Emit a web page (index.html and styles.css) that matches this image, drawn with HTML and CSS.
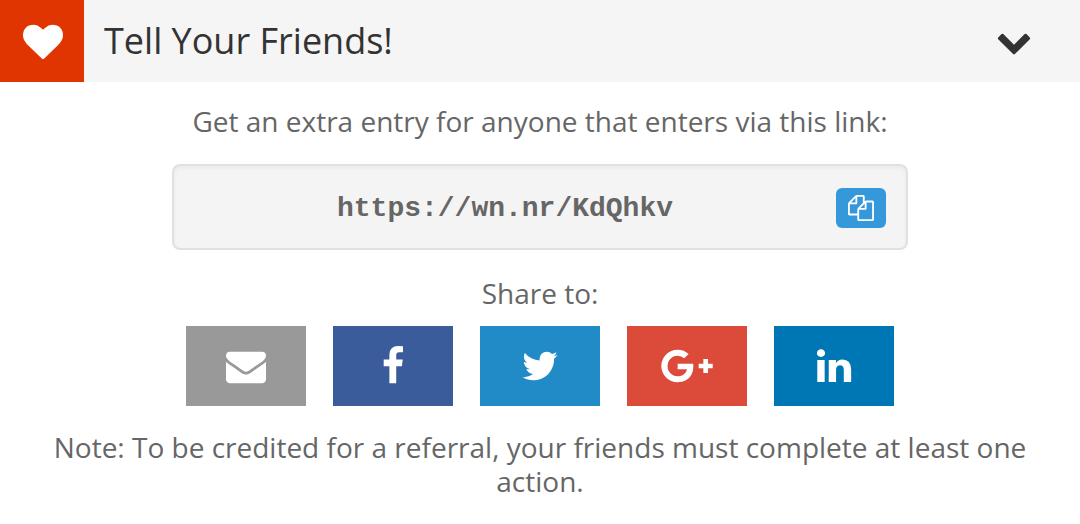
FILE: index.html
```html
<!DOCTYPE html>
<html lang="en">
<head>
<meta charset="utf-8">
<title>Tell Your Friends!</title>
<link rel="stylesheet" href="styles.css">
</head>
<body>
<section class="entry">
  <header class="entry-header">
    <span class="entry-badge">
      <svg class="icon-heart" viewBox="0 0 1792 1792" aria-hidden="true"><path d="M896 1664q-26 0-44-18l-624-602q-10-8-27.5-26t-55.5-65.5-68-97.5-53.5-121-23.5-138q0-220 127-344t351-124q62 0 126.5 21.5t120 58 95.5 68.5 76 68q36-36 76-68t95.5-68.5 120-58 126.5-21.5q224 0 351 124t127 344q0 221-229 450l-623 600q-18 18-44 18z"/></svg>
    </span>
    <h1 class="entry-title">Tell Your Friends!</h1>
    <button class="entry-toggle" type="button" aria-label="Collapse">
      <svg class="icon-chevron" viewBox="0 0 1792 1792" aria-hidden="true"><path d="M1683 808l-742 741q-19 19-45 19t-45-19l-742-741q-19-19-19-45.5t19-45.5l166-165q19-19 45-19t45 19l531 531 531-531q19-19 45-19t45 19l166 165q19 19 19 45.5t-19 45.5z"/></svg>
    </button>
  </header>
  <div class="entry-body">
    <p class="text">Get an extra entry for anyone that enters via this link:</p>
    <div class="link-box">
      <a class="link-url" href="https://wn.nr/KdQhkv">https://wn.nr/KdQhkv</a>
      <button class="copy" type="button" aria-label="Copy link">
        <svg class="icon-copy" viewBox="0 0 1792 1792" aria-hidden="true"><path d="M1696 384q40 0 68 28t28 68v1216q0 40-28 68t-68 28h-960q-40 0-68-28t-28-68v-288h-544q-40 0-68-28t-28-68v-672q0-40 20-88t48-76l408-408q28-28 76-48t88-20h416q40 0 68 28t28 68v328q68-40 128-40h416zm-544 213l-299 299h299v-299zm-640-384l-299 299h299v-299zm196 647l316-316v-416h-384v416q0 40-28 68t-68 28h-416v640h512v-256q0-40 20-88t48-76zm956 804v-1152h-384v416q0 40-28 68t-68 28h-416v640h896z"/></svg>
      </button>
    </div>
    <p class="text">Share to:</p>
    <div class="share">
      <button class="share-button email" type="button" aria-label="Email">
        <svg class="icon-share" viewBox="0 0 1792 1792" aria-hidden="true"><path d="M1792 710v794q0 66-47 113t-113 47h-1472q-66 0-113-47t-47-113v-794q44 49 101 87 362 246 497 345 57 42 92.5 65.5t94.5 48 110 24.5h2q51 0 110-24.5t94.5-48 92.5-65.5q170-123 498-345 57-39 100-87zm0-294q0 79-49 151t-122 123q-376 261-468 325-10 7-42.5 31t-54 38.5-52 32.5-57.5 27-50 9h-2q-23 0-50-9t-57.5-27-52-32.5-54-38.5-42.5-31q-91-64-262-182.5t-205-142.5q-62-42-117-115.5t-55-136.5q0-78 41.5-130t118.5-52h1472q65 0 112.5 47t47.5 113z"/></svg>
      </button>
      <button class="share-button facebook" type="button" aria-label="Facebook">
        <svg class="icon-share" viewBox="0 0 1792 1792" aria-hidden="true"><path d="M1343 12v264h-157q-86 0-116 36t-30 108v189h293l-39 296h-254v759h-306v-759h-255v-296h255v-218q0-186 104-288.5t277-102.5q147 0 228 12z"/></svg>
      </button>
      <button class="share-button twitter" type="button" aria-label="Twitter">
        <svg class="icon-share" viewBox="0 0 1792 1792" aria-hidden="true"><path d="M1684 408q-67 98-162 167 1 14 1 42 0 130-38 259.5t-115.5 248.5-184.5 210.5-258 146-323 54.5q-271 0-496-145 35 4 78 4 225 0 401-138-105-2-188-64.5t-114-159.5q33 5 61 5 43 0 85-11-112-23-185.5-111.5t-73.5-205.5v-4q68 38 146 41-66-44-105-115t-39-154q0-88 44-163 121 149 294.5 238.5t371.5 99.5q-8-38-8-74 0-134 94.5-228.5t228.5-94.5q140 0 236 102 109-21 205-78-37 115-142 178 93-10 186-50z"/></svg>
      </button>
      <button class="share-button google" type="button" aria-label="Google Plus">
        <svg class="icon-share wide" viewBox="0 0 2304 1792" aria-hidden="true"><path d="M1437 913q0 208-87 370.5t-248 254-369 91.5q-149 0-285-58t-234-156-156-234-58-285 58-285 156-234 234-156 285-58q286 0 491 192l-199 191q-117-113-292-113-123 0-227.5 62t-165.5 168.5-61 232.5 61 232.5 165.5 168.5 227.5 62q83 0 152.5-23t114.5-57.5 78.5-78.5 49-83 21.5-74h-416v-252h692q12 63 12 122zm867-122v210h-209v209h-210v-209h-209v-210h209v-209h210v209h209z"/></svg>
      </button>
      <button class="share-button linkedin" type="button" aria-label="LinkedIn">
        <svg class="icon-share" viewBox="0 0 1792 1792" aria-hidden="true"><path d="M477 625v991h-330v-991h330zm21-306q1 73-50.5 122t-135.5 49h-2q-82 0-132-49t-50-122q0-74 51.5-122.5t134.5-48.5 133 48.5 51 122.5zm1166 729v568h-329v-530q0-105-40.5-164.5t-126.5-59.5q-63 0-105.5 34.5t-63.5 85.5q-11 30-11 81v553h-329q2-399 2-647t-1-296l-1-48h329v144h-2q20-32 41-56t56.5-52 87-43.5 114.5-15.5q171 0 275 113.5t104 332.5z"/></svg>
      </button>
    </div>
    <p class="text">Note: To be credited for a referral, your friends must complete at least one action.</p>
  </div>
</section>
</body>
</html>
```
FILE: styles.css
```css
* {
  box-sizing: border-box;
}

body {
  margin: 0;
  background: #fff;
  color: #666;
  font: 28px/34px "Open Sans", sans-serif;
}

button {
  border: 0;
  padding: 0;
  display: flex;
  align-items: center;
  justify-content: center;
  cursor: pointer;
}

svg {
  display: block;
  fill: currentColor;
}

.entry-header {
  display: flex;
  align-items: stretch;
  min-height: 82px;
  background: #f5f5f5;
  color: #333;
}

.entry-badge {
  display: flex;
  align-items: center;
  justify-content: center;
  width: 84px;
  padding: 2px 0 0 2px;
  background: #e03500;
  color: #fff;
}

.icon-heart {
  width: 40px;
  height: 40px;
}

.entry-title {
  flex: 1;
  align-self: center;
  margin: 0;
  padding-left: 20px;
  font-size: 36px;
  line-height: 48px;
  font-weight: 400;
}

.entry-toggle {
  width: 132px;
  background: transparent;
  color: inherit;
}

.icon-chevron {
  width: 36px;
  height: 36px;
}

.entry-body {
  display: flex;
  flex-direction: column;
  align-items: center;
  padding: 22px 40px;
}

.text {
  margin: 0;
  text-align: center;
}

.link-box {
  display: flex;
  align-items: center;
  gap: 20px;
  width: 100%;
  max-width: 736px;
  min-height: 86px;
  margin: 26px 0;
  padding: 2px 20px 0;
  border: 2px solid #e1e1e1;
  border-radius: 8px;
  background: #f4f4f4;
  box-shadow: inset 0 2px 4px rgba(0, 0, 0, 0.05);
}

.link-url {
  flex: 1;
  padding-top: 2px;
  color: #666;
  font-family: Courier, "Liberation Mono", monospace;
  font-weight: 700;
  text-align: center;
  text-decoration: none;
}

.copy {
  width: 50px;
  height: 40px;
  border-radius: 6px;
  background: #3498db;
  color: #fff;
}

.icon-copy {
  width: 26px;
  height: 26px;
}

.share {
  display: flex;
  justify-content: space-between;
  width: 100%;
  max-width: 708px;
  margin: 16px 0 24px;
}

.share-button {
  width: 120px;
  height: 80px;
  color: #fff;
}

.icon-share {
  width: 40px;
  height: 40px;
}

.wide {
  width: 52px;
}

.email {
  background: #999;
}

.facebook {
  background: #3a5c9a;
}

.twitter {
  background: #208bc6;
}

.google {
  background: #dc4b3a;
}

.linkedin {
  background: #0077b5;
}
```
